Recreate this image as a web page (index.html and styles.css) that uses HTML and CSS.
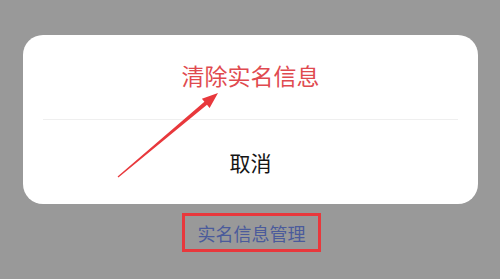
FILE: index.html
```html
<!DOCTYPE html>
<html lang="zh">
<head>
<meta charset="utf-8">
<link rel="stylesheet" href="styles.css">
</head>
<body>
<div class="page">
  <div class="sheet">
    <div class="row"><span class="title">清除实名信息</span></div>
    <div class="divider"></div>
    <div class="row"><span class="cancel">取消</span></div>
  </div>
  <div class="footer"><span class="manage">实名信息管理</span></div>
  <svg class="arrow" width="500" height="279" viewBox="0 0 500 279">
    <polygon points="117.6,176.5 204.4,101.8 201.9,98.7 218,93 209.6,107.9 207.0,104.8 118.4,177.5" fill="#e8383c"/>
  </svg>
</div>
</body>
</html>
```
FILE: styles.css
```css
html, body {
  margin: 0;
  padding: 0;
}
body {
  width: 500px;
  height: 279px;
  background: #999999;
  font-family: "Noto Sans CJK SC", "Noto Sans", sans-serif;
  overflow: hidden;
}
.page {
  position: relative;
  width: 500px;
  height: 279px;
  padding-top: 35px;
  box-sizing: border-box;
}
.sheet {
  margin: 0 22px 0 23px;
  background: #ffffff;
  border-radius: 20px;
}
.row {
  height: 84px;
  display: flex;
  align-items: center;
  justify-content: center;
}
.title {
  color: #e04a4f;
  font-size: 23px;
  margin-bottom: 4px;
}
.divider {
  height: 1px;
  background: #efefef;
  margin: 0 20px;
}
.cancel {
  color: #151515;
  font-size: 21px;
}
.footer {
  display: flex;
  justify-content: center;
  margin-top: 9px;
  padding-left: 3px;
}
.manage {
  box-sizing: border-box;
  width: 139px;
  height: 39px;
  border: 3px solid #e8383c;
  color: #4b5b9b;
  font-size: 18px;
  display: flex;
  align-items: center;
  justify-content: center;
}
.arrow {
  position: absolute;
  left: 0;
  top: 0;
}
```
